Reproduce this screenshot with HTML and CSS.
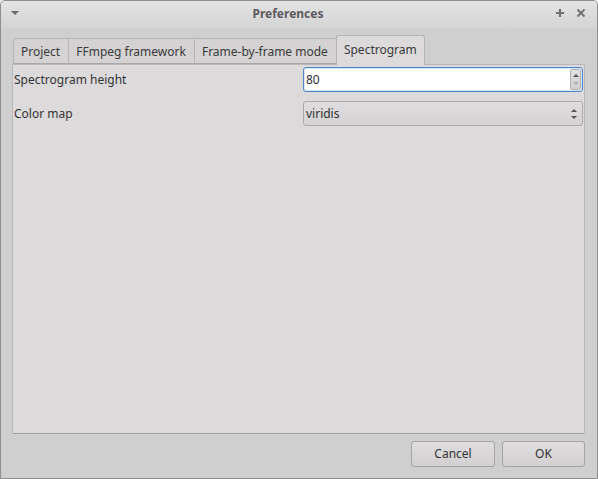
FILE: index.html
```html
<!DOCTYPE html>
<html>
<head>
<meta charset="utf-8">
<link rel="stylesheet" href="styles.css">
</head>
<body>
<div class="window">
  <div class="titlebar">
    <span class="menu-arrow"></span>
    <span class="title">Preferences</span>
    <span class="wbtns">
      <svg class="wbtn" width="10" height="10" viewBox="0 0 10 10"><path d="M5 1v8M1 5h8" stroke="#6f6f6f" stroke-width="2"/></svg>
      <svg class="wbtn" width="10" height="10" viewBox="0 0 10 10"><path d="M1.5 1.5l7 7M8.5 1.5l-7 7" stroke="#6f6f6f" stroke-width="1.8"/></svg>
    </span>
  </div>
  <div class="content">
    <div class="tabs">
      <div class="tab">Project</div>
      <div class="tab">FFmpeg framework</div>
      <div class="tab">Frame-by-frame mode</div>
      <div class="tab active">Spectrogram</div>
    </div>
    <div class="panel">
      <div class="row">
        <span class="label">Spectrogram height</span>
        <div class="spin">
          <span class="value">80</span>
          <div class="spinbtns">
            <span class="arr up"></span>
            <span class="arr down dim"></span>
          </div>
        </div>
      </div>
      <div class="row second">
        <span class="label">Color map</span>
        <div class="combo">
          <span class="value">viridis</span>
          <div class="combobtn">
            <span class="arr up"></span>
            <span class="arr down"></span>
          </div>
        </div>
      </div>
    </div>
    <div class="buttons">
      <div class="btn">Cancel</div>
      <div class="btn ok">OK</div>
    </div>
  </div>
</div>
</body>
</html>
```
FILE: styles.css
```css
html, body {
  margin: 0;
  padding: 0;
  background: #ececec;
}
body {
  font-family: "Noto Sans", "Open Sans", sans-serif;
  font-size: 12px;
  color: #333;
}
.window {
  width: 598px;
  height: 479px;
  box-sizing: border-box;
  border: 1px solid #8e8e8e;
  border-radius: 5px 5px 0 0;
  background: #cfcfcf;
  display: flex;
  flex-direction: column;
  overflow: hidden;
}
.titlebar {
  height: 27px;
  flex: none;
  display: flex;
  align-items: center;
  background: linear-gradient(#e3e3e3, #d4d4d4);
}
.menu-arrow {
  width: 0;
  height: 0;
  border-left: 4px solid transparent;
  border-right: 4px solid transparent;
  border-top: 4px solid #6a6a6a;
  margin-left: 10px;
  margin-top: -3px;
}
.title {
  flex: 1;
  text-align: center;
  font-weight: bold;
  color: #5d5a5e;
  font-size: 12px;
  margin-left: 2px;
  margin-top: -2px;
}
.wbtns {
  display: flex;
  gap: 11px;
  margin-right: 11px;
  margin-top: -3px;
}
.content {
  flex: 1;
  display: flex;
  flex-direction: column;
  padding: 8px 12px 11px 11px;
}
.tabs {
  display: flex;
  align-items: flex-end;
  padding-left: 1px;
  height: 28px;
  position: relative;
  z-index: 1;
}
.tab {
  height: 26px;
  box-sizing: border-box;
  padding: 0 8px 0 7px;
  line-height: 25px;
  background: #d4d2d3;
  border: 1px solid #b6b4b5;
  border-left: none;
  border-bottom: 1px solid #a9a7a8;
  color: #3b3b3b;
}
.tab:first-child {
  border-left: 1px solid #b6b4b5;
  border-radius: 3px 0 0 0;
}
.tab.active {
  height: 30px;
  background: #dcdadb;
  border: 1px solid #b6b4b5;
  border-left: 1px solid #b6b4b5;
  border-bottom: none;
  border-radius: 3px 3px 0 0;
  margin-left: -1px;
  line-height: 27px;
  padding: 0 7px 0 7px;
  margin-bottom: -1px;
}
.panel {
  flex: 1;
  background: #dcdadb;
  border: 1px solid #b9b7b8;
  border-bottom-color: #a3a1a2;
  border-radius: 0 2px 2px 2px;
  padding: 2px 1px 0 1px;
  display: flex;
  flex-direction: column;
  gap: 9px;
}
.row {
  display: flex;
  align-items: center;
  justify-content: space-between;
}
.label {
  color: #333;
  margin-top: -1px;
}
.spin, .combo {
  width: 280px;
  height: 25px;
  box-sizing: border-box;
  border-radius: 3px;
  display: flex;
  align-items: center;
  padding-left: 1px;
}
.spin {
  background: #fff;
  border: 1px solid #4f86c6;
  box-shadow: inset 0 0 0 1px #d7e4f4;
}
.combo {
  background: linear-gradient(#dfdddf, #d5d3d4);
  border: 1px solid #aaa8a9;
}
.value {
  flex: 1;
  padding-left: 1px;
  color: #2e2e2e;
}
.spinbtns {
  width: 11px;
  height: 21px;
  margin-right: 1px;
  border: 1px solid #b4b2b3;
  border-radius: 2px;
  background: linear-gradient(#e2e0e1, #d0cecf);
  display: flex;
  flex-direction: column;
  align-items: center;
  justify-content: space-around;
  padding: 2px 0;
  box-sizing: border-box;
}
.combobtn {
  width: 12px;
  margin-right: 2px;
  display: flex;
  flex-direction: column;
  align-items: center;
  gap: 4px;
}
.arr {
  width: 0;
  height: 0;
  border-left: 3px solid transparent;
  border-right: 3px solid transparent;
}
.arr.up {
  border-bottom: 3px solid #555;
}
.arr.down {
  border-top: 3px solid #555;
}
.arr.dim.down {
  border-top-color: #b0aeaf;
}
.buttons {
  display: flex;
  justify-content: flex-end;
  gap: 7px;
  padding-top: 7px;
}
.btn {
  width: 84px;
  height: 26px;
  box-sizing: border-box;
  border: 1px solid #a5a3a4;
  border-radius: 3px;
  background: linear-gradient(#dfdddf, #d2d0d1);
  text-align: center;
  line-height: 24px;
  color: #333;
}
.btn.ok {
  width: 83px;
}
```
